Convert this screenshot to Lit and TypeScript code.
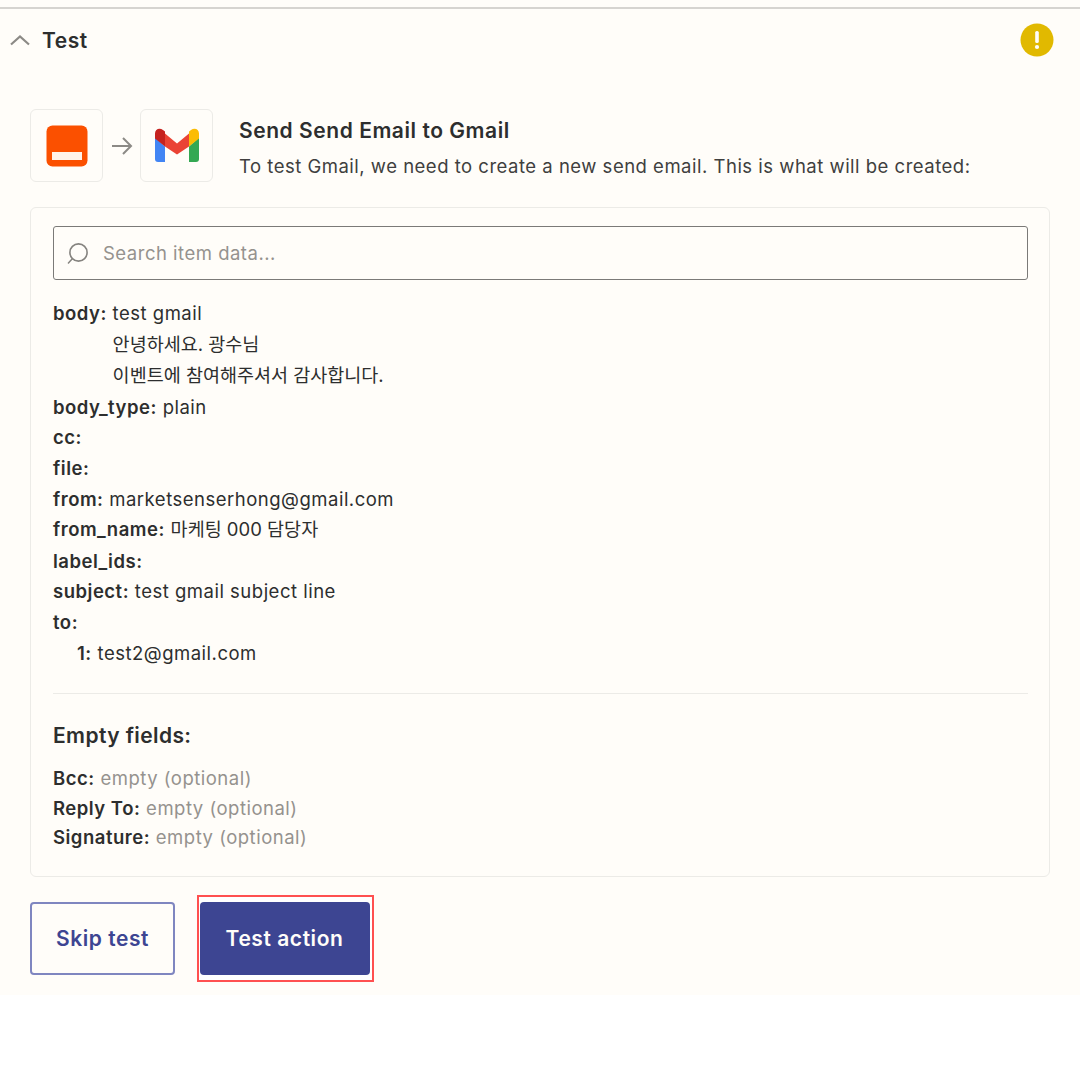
import { LitElement, html, css } from 'lit';
import { customElement } from 'lit/decorators.js';

const FIELDS: { key: string; lines?: string[]; indent?: boolean }[] = [
  { key: 'body', lines: ['test gmail', '안녕하세요. 광수님', '이벤트에 참여해주셔서 감사합니다.'] },
  { key: 'body_type', lines: ['plain'] },
  { key: 'cc' },
  { key: 'file' },
  { key: 'from', lines: ['marketsenserhong@gmail.com'] },
  { key: 'from_name', lines: ['마케팅 000 담당자'] },
  { key: 'label_ids' },
  { key: 'subject', lines: ['test gmail subject line'] },
  { key: 'to' },
  { key: '1', lines: ['test2@gmail.com'], indent: true },
];

const EMPTY = ['Bcc', 'Reply To', 'Signature'];

const isKorean = (s: string) => /[가-힣]/.test(s);

@customElement('app-root')
export class AppRoot extends LitElement {
  static styles = css`
    :host {
      display: block;
      height: 1080px;
      background: #fff;
      font-family: Inter, "Noto Sans CJK KR", sans-serif;
      color: #2d2e2e;
      font-size: 18.5px;
      letter-spacing: 0.5px;
    }

    * {
      box-sizing: border-box;
    }

    .panel {
      height: 995px;
      padding-top: 7px;
      background: #fffdf9;
    }

    .topline {
      height: 2px;
      background: #d6d4d0;
    }

    .header {
      display: flex;
      align-items: center;
      height: 62px;
      padding: 0 26px 0 10px;
    }

    .header h2 {
      flex: 1;
      margin: 0 0 0 12px;
      font-size: 21px;
      font-weight: 600;
      letter-spacing: 0.55px;
    }

    .main {
      padding: 38px 30px 0;
    }

    .intro {
      display: flex;
      align-items: center;
      height: 73px;
    }

    .app-box {
      display: flex;
      align-items: center;
      justify-content: center;
      width: 73px;
      height: 73px;
      border: 1px solid #ecebe7;
      border-radius: 6px;
    }

    .arrow {
      display: block;
      margin: 0 7px 0 9px;
    }

    .intro-text {
      margin-left: 26px;
      padding-top: 6px;
    }

    .intro-text h3 {
      margin: 0 0 9px;
      font-size: 21px;
      line-height: 26px;
      font-weight: 600;
      letter-spacing: 0.55px;
    }

    .intro-text p {
      margin: 0;
      line-height: 26px;
      color: #403f3e;
    }

    .card {
      height: 670px;
      margin-top: 25px;
      padding: 18px 21px 18px 22px;
      border: 1px solid #ecebe7;
      border-radius: 6px;
    }

    .search {
      display: flex;
      align-items: center;
      height: 54px;
      padding-left: 13px;
      border: 1px solid #7b7a78;
      border-radius: 3px;
      color: #95928e;
    }

    .search span {
      margin-left: 12px;
    }

    .fields {
      margin-top: 18px;
    }

    .row {
      display: flex;
      align-items: flex-start;
      line-height: 30.6px;
      white-space: nowrap;
    }

    .row.indent {
      padding-left: 24px;
    }

    .row .ko {
      line-height: 31.6px;
      letter-spacing: 0;
    }

    .row b,
    .empty b {
      font-weight: 600;
      margin-right: 5.8px;
    }

    .divider {
      height: 1px;
      margin-top: 25px;
      background: #ecebe7;
    }

    .card h4 {
      margin: 29px 0 0;
      font-size: 21px;
      line-height: 26px;
      font-weight: 600;
      letter-spacing: 0.4px;
    }

    .empties {
      margin-top: 15px;
    }

    .empty {
      line-height: 29.6px;
      color: #95928e;
    }

    .empty b {
      color: #2d2e2e;
    }

    .actions {
      display: flex;
      align-items: center;
      gap: 25px;
      margin-top: 25px;
    }

    button {
      height: 73px;
      padding: 0 0 1px;
      border-radius: 4px;
      font: 600 21px Inter, sans-serif;
      letter-spacing: 0.55px;
    }

    .skip {
      width: 145px;
      border: 2px solid #7f86c0;
      background: #fffdf9;
      color: #3d4592;
    }

    .run {
      width: 170px;
      border: 0;
      background: #3d4592;
      color: #fffdf9;
    }

    .highlight {
      display: flex;
      padding: 5px 2px 5px 0.5px;
      margin: -7.5px -5px -7.5px -3px;
      border: 2.5px solid #ff5050;
      background: #fff;
    }
  `;

  render() {
    return html`
      <div class="panel">
        <div class="topline"></div>
        <div class="header">
          <svg width="20" height="12" viewBox="0 0 20 12" fill="none" stroke="#8c8a86" stroke-width="2.200">
            <path d="M1 10.500 10 2.500l9 8" />
          </svg>
          <h2>Test</h2>
          <svg width="34" height="34" viewBox="0 0 34 34">
            <circle cx="17" cy="17" r="16.500" fill="#e1b900" />
            <rect x="15.200" y="8" width="3.600" height="12" rx="1.600" fill="#fffdf9" />
            <circle cx="17" cy="24" r="2.100" fill="#fffdf9" />
          </svg>
        </div>
        <div class="main">
          <div class="intro">
            <div class="app-box">
              <svg width="42" height="42" viewBox="0 0 42 42">
                <rect x="0.500" y="0.500" width="41" height="41" rx="6" fill="#fb5000" />
                <rect x="6" y="27" width="30" height="8" fill="#fff3ea" />
              </svg>
            </div>
            <svg class="arrow" width="21" height="20" viewBox="0 0 21 20" fill="none" stroke="#8c8a86" stroke-width="2">
              <path d="M0 10h19M11 2l8 8-8 8" />
            </svg>
            <div class="app-box">
              <svg width="46" height="36" viewBox="0 0.500 46 36" fill="none">
                <path d="M1 10 11 19v15.500H4a3 3 0 0 1-3-3z" fill="#4285f4" />
                <path d="M45 10 35 19v15.500h7a3 3 0 0 0 3-3z" fill="#34a853" />
                <path d="M11 6 23 16 35 6v13L23 27 11 19z" fill="#ea4335" />
                <path d="M1 11V6C1 1 6 0 9 2.500L11 4v15z" fill="#c5221f" />
                <path d="M45 11V6c0-5-5-6-8-3.500L35 4v15z" fill="#fbbc04" />
              </svg>
            </div>
            <div class="intro-text">
              <h3>Send Send Email to Gmail</h3>
              <p>To test Gmail, we need to create a new send email. This is what will be created:</p>
            </div>
          </div>
          <div class="card">
            <div class="search">
              <svg width="24" height="24" viewBox="0 0 24 24" fill="none" stroke="#85837f">
                <circle cx="11.500" cy="11.500" r="8.600" stroke-width="1.600" />
                <path d="M5.500 17.500 1 22.500" stroke-width="1.400" />
              </svg>
              <span>Search item data...</span>
            </div>
            <div class="fields">
              ${FIELDS.map(
                (f) => html`
                  <div class="row ${f.indent ? 'indent' : ''}">
                    <b>${f.key}:</b>
                    <div>
                      ${(f.lines ?? []).map((l) => html`<div class=${isKorean(l) ? 'ko' : ''}>${l}</div>`)}
                    </div>
                  </div>
                `
              )}
            </div>
            <div class="divider"></div>
            <h4>Empty fields:</h4>
            <div class="empties">
              ${EMPTY.map((k) => html`<div class="empty"><b>${k}:</b>empty (optional)</div>`)}
            </div>
          </div>
          <div class="actions">
            <button class="skip">Skip test</button>
            <div class="highlight"><button class="run">Test action</button></div>
          </div>
        </div>
      </div>
    `;
  }
}
